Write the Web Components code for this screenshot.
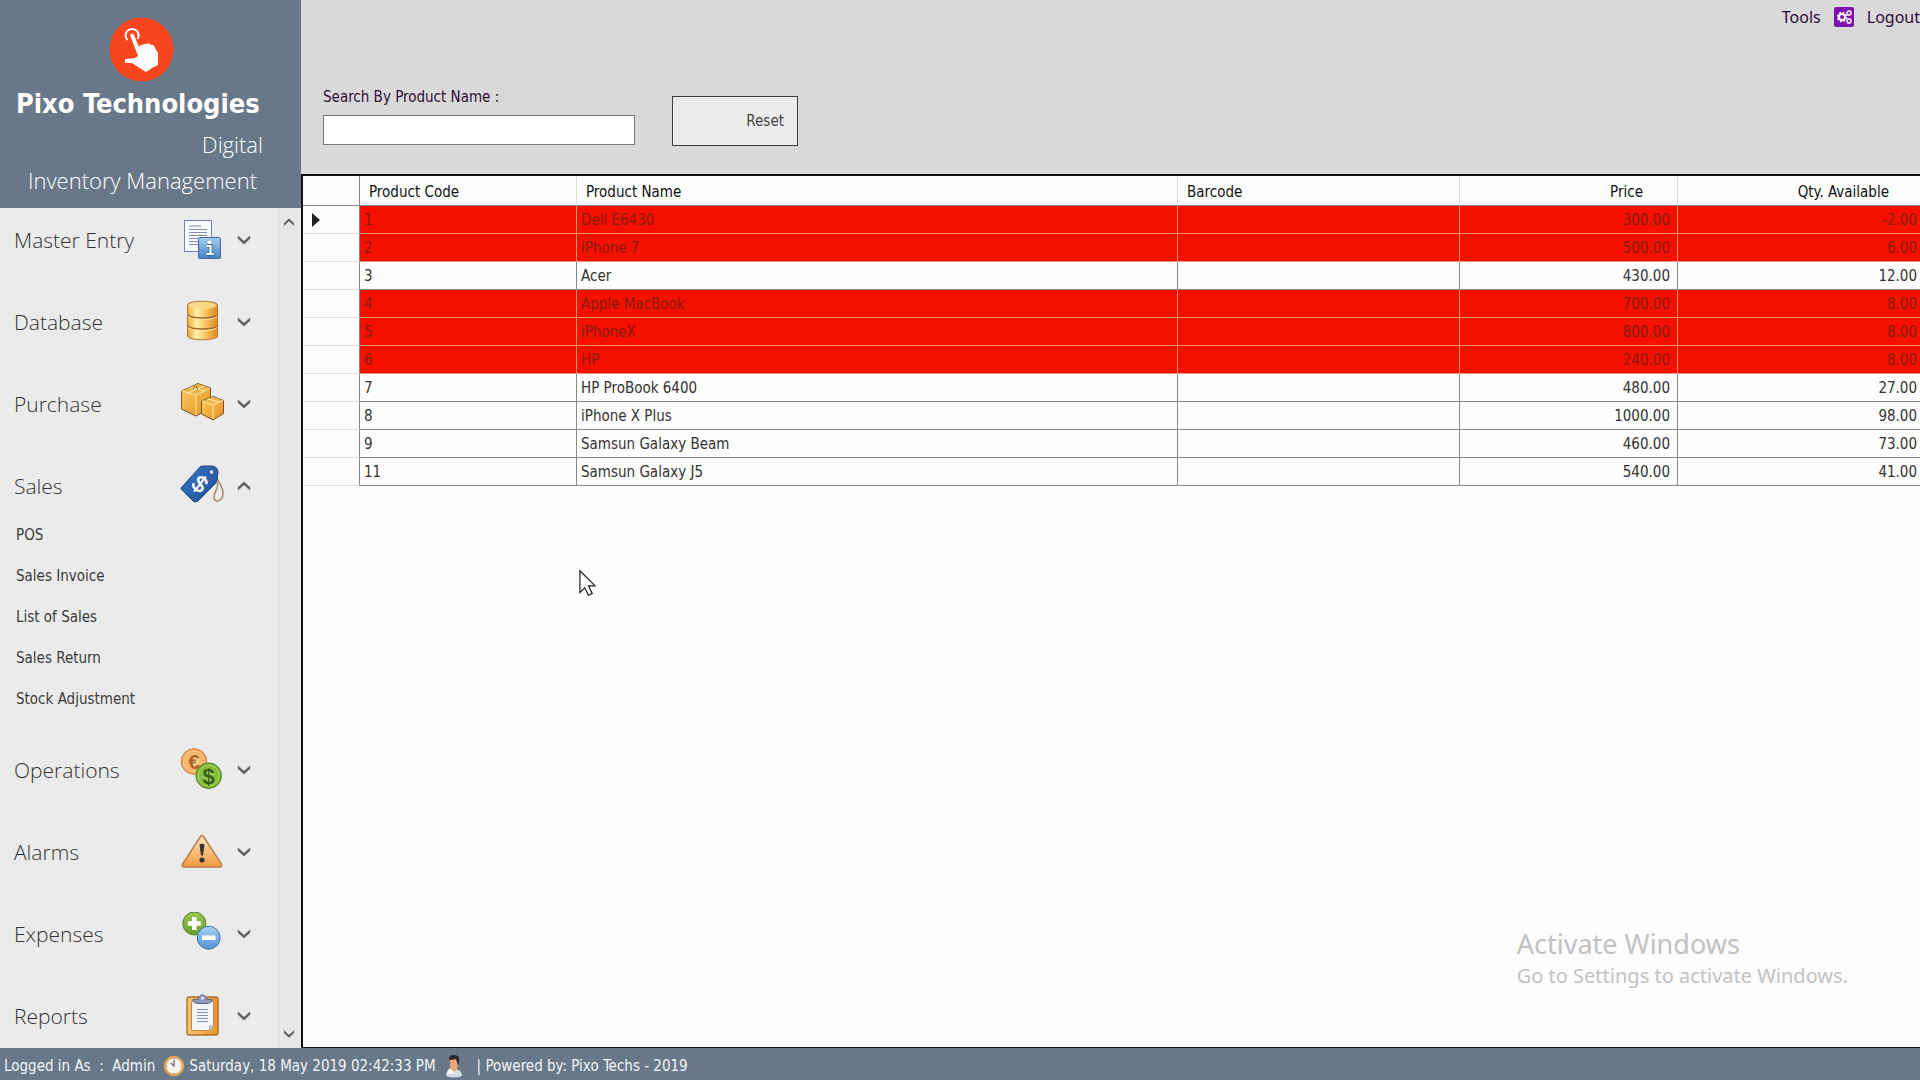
<!DOCTYPE html>
<html lang="en">
<head>
<meta charset="utf-8">
<title>Digital Inventory Management</title>
<style>
  body {
    margin: 0;
    font-family: "DejaVu Sans Condensed", "Noto Sans", sans-serif;
    font-size: 15px;
    color: #333;
  }
</style>
</head>
<body>
<inventory-app></inventory-app>

<script>
  // Small helper: every component only has to give its markup
  class BaseElement extends HTMLElement {
    connectedCallback() {
      if (this.shadowRoot) return;
      const template = document.createElement('template');
      template.innerHTML = this.render();
      this.attachShadow({ mode: 'open' }).appendChild(template.content.cloneNode(true));
    }
  }

  const icons = {
    document: `
      <defs><linearGradient id="g" x2="0" y2="1"><stop stop-color="#a5cdee"/><stop offset="1" stop-color="#4682c0"/></linearGradient></defs>
      <rect x="4.500" y="2.500" width="27" height="31" fill="#f7f9fd" stroke="#7481ae"/>
      <path d="M9 8h12M9 11.500h18M9 14.500h18M9 17.500h18M9 20.500h9M9 23.500h9M9 26.500h9" stroke="#8590a8"/>
      <rect x="18.500" y="19.500" width="22" height="21" rx="1" fill="url(#g)" stroke="#3a6da8"/>
      <path d="M27.500 28h3v8M26.500 36.500h7" fill="none" stroke="#35679f" stroke-width="4"/>
      <path d="M27 28h3.500v8M26.500 36h7" fill="none" stroke="#fff" stroke-width="2.200"/>
      <circle cx="29.500" cy="24.300" r="1.900" fill="#fff"/>`,
    database: `
      <defs><linearGradient id="g"><stop stop-color="#f0a63c"/><stop offset=".3" stop-color="#fff0a8"/><stop offset=".6" stop-color="#f7c766"/><stop offset="1" stop-color="#df851f"/></linearGradient></defs>
      <path d="M7.500 5v31c0 5 30 5 30 0V5c0-5-30-5-30 0z" fill="url(#g)" stroke="#b87532"/>
      <ellipse cx="22.500" cy="5.500" rx="14" ry="3.500" fill="#fbd989"/>
      <path d="M8 15c3 4 26 4 29 0M8 26c3 4 26 4 29 0" fill="none" stroke="#a8662a" stroke-width="1.500"/>
      <path d="M8 16.500c3 4 26 4 29 0M8 27.500c3 4 26 4 29 0" fill="none" stroke="#ffe9a0"/>`,
    boxes: `
      <defs><linearGradient id="g" x2="1" y2="1"><stop stop-color="#fbcf66"/><stop offset="1" stop-color="#e28f1c"/></linearGradient></defs>
      <path d="M1.500 9 18 1.500 30.500 6v21L15.500 34 1.500 27z" fill="url(#g)" stroke="#7c5522" stroke-linejoin="round"/>
      <path d="M2 9l14 4L30 6.500 18 2z" fill="#eeb54c"/>
      <path d="M2 9l14 4 14-6.500M16 13v20M10 5l14 4M24 4 8 11" fill="none" stroke="#ffe9a8"/>
      <path d="M13 7l3-3 2 4" fill="none" stroke="#9c6a20"/>
      <path d="M21.500 19 33 14.500 43.500 18.500v13L33 38 21.500 32z" fill="url(#g)" stroke="#7c5522" stroke-linejoin="round"/>
      <path d="M22 19l11 4 10-4.500L33 15z" fill="#eeb54c"/>
      <path d="M22 19l11 4 10-4.500M33 23v14M28 17l11 3" fill="none" stroke="#ffe9a8"/>`,
    tag: `
      <defs><linearGradient id="g" x2="1" y2="1"><stop stop-color="#3877c4"/><stop offset="1" stop-color="#1e4f96"/></linearGradient></defs>
      <path d="M33 8c3 7 11 14 10 22-1 8-8 9-9 4-1-6 6-9 3-16" fill="none" stroke="#a58465" stroke-width="1.500"/>
      <path d="M1 24 20 3q1-1 3-1h9q6 1 6 6l-1 8q0 2-2 4L18 37q-3 2-5 0L1 25z" fill="url(#g)" stroke="#244a82"/>
      <circle cx="31.500" cy="8" r="2.500" fill="#d6e2f4" stroke="#183c70"/>
      <text x="20" y="28" transform="rotate(38 20 20)" text-anchor="middle" font-family="Liberation Sans" font-size="23" fill="#fff" stroke="#fff" stroke-width=".5">$</text>`,
    coins: `
      <defs>
        <radialGradient id="g"><stop stop-color="#ffd9a0"/><stop offset="1" stop-color="#f2a24a"/></radialGradient>
        <radialGradient id="h"><stop stop-color="#a8d85a"/><stop offset="1" stop-color="#74ae28"/></radialGradient>
      </defs>
      <circle cx="14" cy="13.500" r="12.800" fill="url(#g)" stroke="#c98340"/>
      <circle cx="14" cy="13.500" r="10.500" fill="none" stroke="#ffd29a"/>
      <text x="14" y="20.500" text-anchor="middle" font-family="Liberation Sans" font-size="21" font-weight="bold" fill="#a8642a">€</text>
      <circle cx="28.700" cy="27.700" r="12.800" fill="url(#h)" stroke="#55842a"/>
      <circle cx="28.700" cy="27.700" r="10.500" fill="none" stroke="#b4dc70"/>
      <text x="28.700" y="35.500" text-anchor="middle" font-family="Liberation Sans" font-size="22" font-weight="bold" fill="#35601a">$</text>`,
    alarm: `
      <defs><linearGradient id="g" x2="0" y2="1"><stop stop-color="#ffe6c0"/><stop offset="1" stop-color="#f2993c"/></linearGradient></defs>
      <path d="M20.500 6.500q1.500-2 3 0L41.500 34q1 3-2 3h-35q-3 0-2-3z" fill="url(#g)" stroke="#b97a45" stroke-width="1.400"/>
      <path d="M19.500 14.500q2.500-1.500 5 0l-1.500 11h-2z" fill="#333"/>
      <circle cx="22" cy="30" r="2.600" fill="#333"/>`,
    plusminus: `
      <defs>
        <linearGradient id="g" x2="0" y2="1"><stop stop-color="#9ccb50"/><stop offset="1" stop-color="#649c2c"/></linearGradient>
        <linearGradient id="h" x2="0" y2="1"><stop stop-color="#a9d2f5"/><stop offset="1" stop-color="#4f93d6"/></linearGradient>
      </defs>
      <circle cx="14.300" cy="11.500" r="11.500" fill="url(#g)" stroke="#557f2e"/>
      <path d="M14.300 5v13M7.800 11.500h13" stroke="#fff" stroke-width="4.600"/>
      <circle cx="28.700" cy="25.700" r="11.500" fill="url(#h)" stroke="#4474a8"/>
      <path d="M22 25.700h13.500" stroke="#fff" stroke-width="4.600"/>`,
    clipboard: `
      <defs><linearGradient id="g"><stop stop-color="#f9c46c"/><stop offset="1" stop-color="#e8912c"/></linearGradient></defs>
      <rect x="7" y="3" width="31" height="38" rx="2" fill="url(#g)" stroke="#ad6f2c" stroke-width="1.400"/>
      <path d="M11.500 7.500h22V32l-4 4.500h-18z" fill="#f4f6fc" stroke="#c08a50"/>
      <path d="M33.500 32h-4v4.500" fill="#d0d6e4" stroke="#a0a8b8"/>
      <path d="M17 15.500h11M17 18.500h11M17 21.500h11M17 24.500h11M17 27.500h11" stroke="#8493b4"/>
      <path d="M13 5.500h5q1-4.500 4.500-4.500T27 5.500h5q0 3.500-5 4h-9q-5-.5-5-4z" fill="#8d9bc2" stroke="#5a6688"/>
      <circle cx="22.500" cy="4" r="1.500" fill="#e8ecf8"/>`,
    down: `<path d="M15.500 17.500 22 23.500 28.500 17.500V20.500L22 26.500 15.500 20.500z" fill="#5c5c5c" stroke="#5c5c5c" stroke-width=".6"/>`,
    up: `<path d="M15.500 26.500 22 20.500 28.500 26.500V23.500L22 17.500 15.500 23.500z" fill="#5c5c5c" stroke="#5c5c5c" stroke-width=".6"/>`
  };

  customElements.define('app-icon', class extends BaseElement {
    render() {
      return `
        <style>
          :host { display: block; width: 44px; height: 44px; flex: none; }
          svg { display: block; width: 100%; height: 100%; }
        </style>
        <svg viewBox="0 0 44 44" aria-hidden="true">${icons[this.getAttribute('name')]}</svg>`;
    }
  });

  customElements.define('brand-header', class extends BaseElement {
    render() {
      return `
        <style>
          :host {
            display: block;
            box-sizing: border-box;
            height: 208px;
            padding: 17px 38px 0 16px;
            background: #687888;
            color: #fff;
            white-space: nowrap;
          }
          svg { display: block; width: 65px; height: 65px; margin-left: 93px; }
          h1 { margin: 0; font: bold 27px/44px "DejaVu Sans Condensed", sans-serif; }
          p { margin: 0; font: 300 22px/36px "Open Sans", sans-serif; text-align: right; }
          p + p { padding-right: 6px; }
        </style>
        <svg viewBox="0 0 65 65" aria-hidden="true">
          <circle cx="32.500" cy="32.500" r="32" fill="#f9461c"/>
          <path d="M18.500 23a6.500 6.500 0 1 1 10-1" fill="none" stroke="#fff" stroke-width="2"/>
          <path d="M21 18q2-3 4 0l5 12q1-3 4-2 1-2 4-1 2-2 4 1 3-1 4 3l3 5v12l-6 3-6 4-8-5-6-4H16v-4l10-1 3-2z" fill="#fff"/>
        </svg>
        <h1>Pixo Technologies</h1>
        <p>Digital</p>
        <p>Inventory Management</p>`;
    }
  });

  customElements.define('nav-group', class extends BaseElement {
    render() {
      const open = this.hasAttribute('open');
      return `
        <style>
          :host { display: block; margin-bottom: 32px; }
          :host([open]) { margin-bottom: 25px; }
          button {
            display: flex;
            align-items: center;
            width: 100%;
            height: 50px;
            padding: 0 14px;
            border: 0;
            background: none;
            color: #333;
            font: 300 21px/30px "Open Sans", sans-serif;
            text-align: left;
          }
          .label { flex: 1; }
          .arrow { width: 40px; }
          ul { margin: 0; padding: 4px 0 0 16px; list-style: none; }
        </style>
        <button type="button" aria-expanded="${open}">
          <span class="label">${this.getAttribute('label')}</span>
          <app-icon name="${this.getAttribute('icon')}"></app-icon>
          <app-icon class="arrow" name="${open ? 'up' : 'down'}"></app-icon>
        </button>
        ${open ? '<ul><slot></slot></ul>' : ''}`;
    }
  });

  customElements.define('nav-link', class extends BaseElement {
    render() {
      return `
        <style>
          :host { display: block; }
          a { display: block; line-height: 41px; color: #3c3c3c; text-decoration: none; }
        </style>
        <a href="#"><slot></slot></a>`;
    }
  });

  customElements.define('side-bar', class extends BaseElement {
    render() {
      return `
        <style>
          :host { display: flex; flex-direction: column; width: 301px; flex: none; background: #ebebeb; }
          .scroller { display: flex; flex: 1; min-height: 0; }
          nav { flex: 1; padding-top: 7px; overflow: hidden; }
          .track {
            display: flex;
            flex-direction: column;
            justify-content: space-between;
            width: 23px;
            background: #e7e7e7;
          }
          .track button { width: 22px; height: 28px; padding: 0; border: 0; background: none; }
          .track app-icon { width: 22px; height: 28px; transform: scale(1.5); }
        </style>
        <brand-header></brand-header>
        <div class="scroller">
          <nav>
            <nav-group label="Master Entry" icon="document"></nav-group>
            <nav-group label="Database" icon="database"></nav-group>
            <nav-group label="Purchase" icon="boxes"></nav-group>
            <nav-group label="Sales" icon="tag" open>
              <nav-link>POS</nav-link>
              <nav-link>Sales Invoice</nav-link>
              <nav-link>List of Sales</nav-link>
              <nav-link>Sales Return</nav-link>
              <nav-link>Stock Adjustment</nav-link>
            </nav-group>
            <nav-group label="Operations" icon="coins"></nav-group>
            <nav-group label="Alarms" icon="alarm"></nav-group>
            <nav-group label="Expenses" icon="plusminus"></nav-group>
            <nav-group label="Reports" icon="clipboard"></nav-group>
          </nav>
          <div class="track">
            <button type="button" aria-label="Scroll up"><app-icon name="up"></app-icon></button>
            <button type="button" aria-label="Scroll down"><app-icon name="down"></app-icon></button>
          </div>
        </div>`;
    }
  });

  customElements.define('tool-bar', class extends BaseElement {
    render() {
      return `
        <style>
          :host { display: block; box-sizing: border-box; height: 174px; background: #d9d9d9; color: #300b38; }
          .links { display: flex; justify-content: flex-end; align-items: center; gap: 13px; height: 34px; }
          .links a { color: inherit; text-decoration: none; font: 16px/22px "Noto Sans", sans-serif; }
          .links svg { width: 20px; height: 20px; }
          form { display: flex; align-items: flex-start; gap: 37px; padding: 52px 0 0 22px; }
          label { display: block; line-height: 22px; }
          input {
            display: block;
            box-sizing: border-box;
            width: 312px;
            height: 30px;
            margin-top: 7px;
            border: 1px solid #777;
            background: #fff;
            font: inherit;
          }
          button {
            box-sizing: border-box;
            width: 126px;
            height: 50px;
            margin-top: 10px;
            padding: 0 13px;
            border: 1px solid #3c3c3c;
            background: #ebebeb;
            color: #444;
            font: inherit;
            text-align: right;
          }
        </style>
        <div class="links">
          <a href="#">Tools</a>
          <svg viewBox="0 0 20 20" aria-hidden="true">
            <rect width="20" height="20" rx="2" fill="#7b12b0"/>
            <circle cx="8" cy="10" r="3" fill="none" stroke="#fff" stroke-width="2"/>
            <circle cx="8" cy="10" r="4.500" fill="none" stroke="#fff" stroke-width="1.500" stroke-dasharray="2 1.530"/>
            <circle cx="15" cy="6" r="2" fill="none" stroke="#eccaf6" stroke-width="1.800"/>
            <circle cx="15" cy="14" r="2" fill="none" stroke="#eccaf6" stroke-width="1.800"/>
          </svg>
          <a href="#">Logout</a>
        </div>
        <form>
          <div>
            <label for="search">Search By Product Name :</label>
            <input id="search" type="text">
          </div>
          <button type="button">Reset</button>
        </form>`;
    }
  });

  // code, name, barcode, price, quantity; stock below 10 is marked red
  const products = [
    [1, 'Dell E6430', '', 300, -2],
    [2, 'iPhone 7', '', 500, 6],
    [3, 'Acer', '', 430, 12],
    [4, 'Apple MacBook', '', 700, 8],
    [5, 'iPhoneX', '', 800, 8],
    [6, 'HP', '', 240, 8],
    [7, 'HP ProBook 6400', '', 480, 27],
    [8, 'iPhone X Plus', '', 1000, 98],
    [9, 'Samsun Galaxy Beam', '', 460, 73],
    [11, 'Samsun Galaxy J5', '', 540, 41]
  ];

  customElements.define('product-grid', class extends BaseElement {
    render() {
      const rows = products.map(([code, name, barcode, price, qty], i) => `
        <tr class="${qty < 10 ? 'low' : ''}">
          <td class="head">${i === 0 ? '<svg viewBox="0 0 8 14" aria-hidden="true"><path d="M0 0 8 7 0 14z" fill="#222"/></svg>' : ''}</td>
          <td>${code}</td><td>${name}</td><td>${barcode}</td>
          <td class="num">${price.toFixed(2)}</td><td class="num">${qty.toFixed(2)}</td>
        </tr>`).join('');
      return `
        <style>
          :host { display: block; }
          table { width: 100%; table-layout: fixed; border-collapse: separate; border-spacing: 0; }
          .c-head { width: 57px; }
          .c-code { width: 217px; }
          .c-barcode { width: 282px; }
          .c-price { width: 218px; }
          .c-qty { width: 242px; }
          th, td { box-sizing: border-box; padding: 0 4px; text-align: left; line-height: 22px; }
          th {
            height: 30px;
            padding: 2px 9px 0;
            border-right: 1px solid #ddd;
            border-bottom: 1px solid #888;
            color: #111;
            font-weight: normal;
          }
          td { height: 28px; border-right: 1px solid #888; border-bottom: 1px solid #888; }
          td.head { padding-left: 9px; border-bottom-color: #ddd; }
          th:first-child { border-right-color: #888; }
          th:last-child, td:last-child { border-right: 0; }
          .num { text-align: right; }
          td.num { padding-right: 7px; }
          td.num:last-child { padding-right: 3px; }
          th.num { padding-right: 34px; }
          th.num:last-child { padding-right: 31px; }
          .low td:not(.head) { background: #f51000; color: #861c0a; border-color: #f0906c; }
          svg { display: block; width: 8px; height: 14px; }
        </style>
        <table>
          <colgroup>
            <col class="c-head"><col class="c-code"><col>
            <col class="c-barcode"><col class="c-price"><col class="c-qty">
          </colgroup>
          <thead>
            <tr><th></th><th>Product Code</th><th>Product Name</th><th>Barcode</th><th class="num">Price</th><th class="num">Qty. Available</th></tr>
          </thead>
          <tbody>${rows}</tbody>
        </table>`;
    }
  });

  customElements.define('status-bar', class extends BaseElement {
    render() {
      return `
        <style>
          :host {
            display: flex;
            align-items: center;
            height: 32px;
            padding: 4px 4px 0;
            box-sizing: border-box;
            background: #687888;
            color: #f2f5f7;
            line-height: 22px;
            white-space: pre;
          }
          svg { width: 22px; height: 24px; margin: 0 4px 0 8px; }
          .user { width: 18px; margin: 0 14px 0 9px; }
        </style>
        <span>Logged in As  :  Admin</span>
        <svg viewBox="0 0 22 24" aria-hidden="true">
          <circle cx="11" cy="12" r="9" fill="#f6f3ec" stroke="#e0a458" stroke-width="2.500"/>
          <path d="M11 6v6l-3-3M11 4v1M11 19v1M3.500 12h1M17.500 12h1" fill="none" stroke="#667" stroke-width="1.200"/>
        </svg>
        <span>Saturday, 18 May 2019 02:42:33 PM</span>
        <svg class="user" viewBox="0 0 18 24" aria-hidden="true">
          <path d="M1 22q0-7 8-7t8 7q-8 3-16 0z" fill="#d4dae4"/>
          <path d="M5 14q-3 2-3 6l8 0z" fill="#f4f6f9"/>
          <path d="M5 3h8v9q-1 5-4 5t-4-5z" fill="#eda878"/>
          <path d="M4 6q0-5 5-5 6 0 5 6l-1 5-2-7q-4 1-7 1z" fill="#2c2723"/>
        </svg>
        <span>| Powered by: Pixo Techs - 2019</span>`;
    }
  });

  customElements.define('activation-note', class extends BaseElement {
    render() {
      return `
        <style>
          :host { display: block; color: #c2c2c2; font-family: "Noto Sans", sans-serif; white-space: nowrap; }
          p { margin: 0; font-size: 20px; line-height: 28px; }
          .title { font-size: 27px; line-height: 36px; }
        </style>
        <p class="title">Activate Windows</p>
        <p>Go to Settings to activate Windows.</p>`;
    }
  });

  customElements.define('inventory-app', class extends BaseElement {
    render() {
      return `
        <style>
          :host { display: flex; flex-direction: column; height: 100vh; min-height: 600px; overflow: hidden; }
          .body { display: flex; flex: 1; min-height: 0; }
          main { display: flex; flex-direction: column; flex: 1; min-width: 0; }
          .panel {
            position: relative;
            flex: 1;
            border: 2px solid #111;
            border-right: 0;
            border-bottom-width: 1px;
            background: #fdfdfd;
          }
          /* these two float over the grid */
          activation-note { position: absolute; right: 72px; bottom: 57px; }
          .cursor { position: absolute; left: 276px; top: 393px; width: 17px; height: 28px; }
        </style>
        <div class="body">
          <side-bar></side-bar>
          <main>
            <tool-bar></tool-bar>
            <div class="panel">
              <product-grid></product-grid>
              <activation-note></activation-note>
              <svg class="cursor" viewBox="0 0 18 28" aria-hidden="true">
                <path d="M1 1v23l5-5 4 8 4-2-4-8h7z" fill="#fff" stroke="#222" stroke-width="1.300"/>
              </svg>
            </div>
          </main>
        </div>
        <status-bar></status-bar>`;
    }
  });
</script>
</body>
</html>
